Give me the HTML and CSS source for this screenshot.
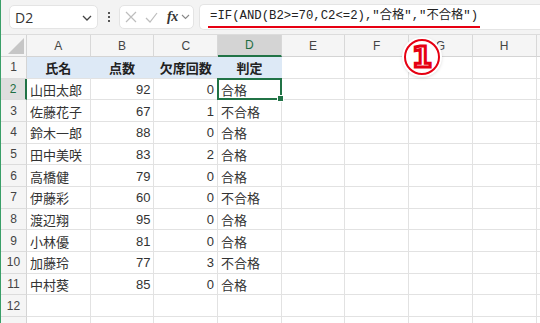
FILE: index.html
```html
<!DOCTYPE html>
<html lang="ja">
<head>
<meta charset="utf-8">
<link rel="stylesheet" href="styles.css">
</head>
<body>
<div class="app">
  <div class="toolbar">
    <div class="namebox"><span class="ref">D2</span>
      <svg class="chev" width="10" height="6" viewBox="0 0 10 6"><path d="M1 1l4 4 4-4" fill="none" stroke="#444" stroke-width="1.3"/></svg>
    </div>
    <div class="dots"><i></i><i></i><i></i></div>
    <div class="fnbox">
      <svg class="ic" width="12" height="12" viewBox="0 0 12 12"><path d="M1 1l10 10M11 1L1 11" stroke="#bdbdbd" stroke-width="1.2" fill="none"/></svg>
      <svg class="ic" width="13" height="11" viewBox="0 0 13 11"><path d="M1 6l4 4 7-9" stroke="#bdbdbd" stroke-width="1.2" fill="none"/></svg>
      <span class="fx">fx</span>
      <svg class="chev2" width="9" height="6" viewBox="0 0 9 6"><path d="M1 1l3.5 3.5L8 1" fill="none" stroke="#888" stroke-width="1.1"/></svg>
    </div>
    <div class="formula"><span class="ftext">=IF(AND(B2&gt;=70,C2&lt;=2),"合格","不合格")</span></div>
  </div>
  <div class="sheet">
    <div class="corner"><span class="tri"></span></div>
    <div class="ch">A</div><div class="ch">B</div><div class="ch">C</div><div class="ch sel">D</div><div class="ch">E</div><div class="ch">F</div><div class="ch">G</div><div class="ch">H</div><div class="ch"></div>

    <div class="rh">1</div><div class="c hd">氏名</div><div class="c hd">点数</div><div class="c hd">欠席回数</div><div class="c hd">判定</div><div class="c"></div><div class="c"></div><div class="c"></div><div class="c"></div><div class="c"></div>

    <div class="rh sel">2</div><div class="c">山田太郎</div><div class="c n">92</div><div class="c n">0</div><div class="c active">合格</div><div class="c"></div><div class="c"></div><div class="c"></div><div class="c"></div><div class="c"></div>

    <div class="rh">3</div><div class="c">佐藤花子</div><div class="c n">67</div><div class="c n">1</div><div class="c">不合格</div><div class="c"></div><div class="c"></div><div class="c"></div><div class="c"></div><div class="c"></div>

    <div class="rh">4</div><div class="c">鈴木一郎</div><div class="c n">88</div><div class="c n">0</div><div class="c">合格</div><div class="c"></div><div class="c"></div><div class="c"></div><div class="c"></div><div class="c"></div>

    <div class="rh">5</div><div class="c">田中美咲</div><div class="c n">83</div><div class="c n">2</div><div class="c">合格</div><div class="c"></div><div class="c"></div><div class="c"></div><div class="c"></div><div class="c"></div>

    <div class="rh">6</div><div class="c">高橋健</div><div class="c n">79</div><div class="c n">0</div><div class="c">合格</div><div class="c"></div><div class="c"></div><div class="c"></div><div class="c"></div><div class="c"></div>

    <div class="rh">7</div><div class="c">伊藤彩</div><div class="c n">60</div><div class="c n">0</div><div class="c">不合格</div><div class="c"></div><div class="c"></div><div class="c"></div><div class="c"></div><div class="c"></div>

    <div class="rh">8</div><div class="c">渡辺翔</div><div class="c n">95</div><div class="c n">0</div><div class="c">合格</div><div class="c"></div><div class="c"></div><div class="c"></div><div class="c"></div><div class="c"></div>

    <div class="rh">9</div><div class="c">小林優</div><div class="c n">81</div><div class="c n">0</div><div class="c">合格</div><div class="c"></div><div class="c"></div><div class="c"></div><div class="c"></div><div class="c"></div>

    <div class="rh">10</div><div class="c">加藤玲</div><div class="c n">77</div><div class="c n">3</div><div class="c">不合格</div><div class="c"></div><div class="c"></div><div class="c"></div><div class="c"></div><div class="c"></div>

    <div class="rh">11</div><div class="c">中村葵</div><div class="c n">85</div><div class="c n">0</div><div class="c">合格</div><div class="c"></div><div class="c"></div><div class="c"></div><div class="c"></div><div class="c"></div>

    <div class="rh">12</div><div class="c"></div><div class="c"></div><div class="c"></div><div class="c"></div><div class="c"></div><div class="c"></div><div class="c"></div><div class="c"></div><div class="c"></div>

    <div class="rh"></div><div class="c"></div><div class="c"></div><div class="c"></div><div class="c"></div><div class="c"></div><div class="c"></div><div class="c"></div><div class="c"></div><div class="c"></div>
  </div>
  <div class="badge"><span>1</span></div>
</div>
</body>
</html>
```
FILE: styles.css
```css
html, body {
  margin: 0;
  padding: 0;
}
body {
  width: 540px;
  height: 323px;
  overflow: hidden;
  background: #fff;
  font-family: "Liberation Sans", "Noto Sans CJK JP", sans-serif;
}
.app {
  position: relative;
  width: 539px;
  height: 323px;
  border-left: 1px solid #3a9f68;
  overflow: hidden;
}
.toolbar {
  display: flex;
  align-items: center;
  height: 34px;
  background: #f3f3f3;
  border-bottom: 1px solid #dcdcdc;
  padding-left: 8px;
}
.namebox {
  box-sizing: border-box;
  width: 89px;
  height: 24px;
  background: #fff;
  border: 1px solid #e4e4e4;
  border-radius: 5px;
  display: flex;
  align-items: center;
  justify-content: space-between;
  padding: 0 5px 0 5px;
}
.ref {
  font-family: "Open Sans", "Liberation Sans", sans-serif;
  font-size: 14px;
  color: #333;
}
.chev { margin-top: 1px; }
.dots {
  width: 21px;
  display: flex;
  flex-direction: column;
  align-items: center;
  gap: 2px;
}
.dots i {
  display: block;
  width: 2px;
  height: 2px;
  background: #555;
}
.fnbox {
  box-sizing: border-box;
  width: 75px;
  height: 24px;
  background: #fff;
  border: 1px solid #e4e4e4;
  border-radius: 5px;
  display: flex;
  align-items: center;
  padding-left: 5px;
}
.fnbox .ic { margin-right: 8px; }
.fx {
  font-family: "Liberation Serif", serif;
  font-style: italic;
  font-weight: bold;
  font-size: 14px;
  color: #333;
  margin-left: 1px;
  margin-right: 3px;
  letter-spacing: -0.5px;
}
.formula {
  flex: 1;
  height: 24px;
  margin-left: 5px;
  background: #fff;
  border: 1px solid #e4e4e4;
  border-right: none;
  border-radius: 5px 0 0 5px;
  display: flex;
  align-items: flex-start;
  padding-left: 8px;
}
.ftext {
  font-family: "Liberation Mono", "Noto Sans CJK JP", monospace;
  font-size: 12.3px;
  line-height: 16px;
  margin-top: 3px;
  padding: 0 2px 2px 2px;
  color: #222;
  border-bottom: 2px solid #e60012;
}
.sheet {
  display: grid;
  grid-template-columns: 26px repeat(8, 63.7px) 1fr;
  grid-template-rows: 22px;
  grid-auto-rows: 21.67px;
}
.corner {
  position: relative;
  background: #f5f5f5;
  border-right: 1px solid #d4d4d4;
  border-bottom: 1px solid #d4d4d4;
}
.tri {
  position: absolute;
  right: 2px;
  bottom: 2px;
  width: 0;
  height: 0;
  border-left: 16px solid transparent;
  border-bottom: 16px solid #c6c6c6;
}
.ch {
  box-sizing: border-box;
  background: #f5f5f5;
  border-right: 1px solid #d8d8d8;
  border-bottom: 1px solid #d4d4d4;
  display: flex;
  align-items: center;
  justify-content: center;
  font-size: 12px;
  color: #444;
}
.ch.sel {
  background: #d4d4d4;
  color: #1e6e42;
  border-bottom: 2px solid #217346;
}
.rh {
  box-sizing: border-box;
  background: #f5f5f5;
  border-right: 1px solid #d4d4d4;
  border-bottom: 1px solid #dcdcdc;
  display: flex;
  align-items: center;
  justify-content: center;
  font-size: 12px;
  color: #444;
}
.rh.sel {
  background: #dedede;
  color: #1e6e42;
  border-right: 2px solid #217346;
}
.c {
  box-sizing: border-box;
  border-right: 1px solid #e2e2e2;
  border-bottom: 1px solid #e2e2e2;
  font-size: 13px;
  color: #333;
  display: flex;
  align-items: center;
  padding: 1px 3px 0 3px;
  white-space: nowrap;
  overflow: hidden;
}
.c.n {
  justify-content: flex-end;
}
.c.hd {
  background: #dde9f6;
  border-right-color: #dde9f6;
  border-bottom-color: #e2e2e2;
  justify-content: center;
  font-weight: bold;
  color: #222;
}
.c.active {
  position: relative;
  overflow: visible;
}
.c.active::after {
  content: "";
  position: absolute;
  left: -1px;
  top: -1px;
  right: -1px;
  bottom: -1px;
  border: 2px solid #217346;
}
.c.active::before {
  content: "";
  position: absolute;
  right: -3px;
  bottom: -3px;
  width: 5px;
  height: 5px;
  background: #217346;
  border: 1px solid #fff;
  z-index: 2;
}
.badge {
  position: absolute;
  left: 403px;
  top: 39px;
  box-sizing: border-box;
  width: 36px;
  height: 36px;
  border-radius: 50%;
  border: 2.5px solid #e60012;
  background: #fff;
  box-shadow: 0 0 0 2px #fff, 0 1px 4px rgba(0,0,0,0.35);
  display: flex;
  align-items: center;
  justify-content: center;
}
.badge span {
  font-family: "DejaVu Sans", sans-serif;
  font-size: 29px;
  font-weight: bold;
  color: #fff;
  -webkit-text-stroke: 3px #e60012;
  line-height: 1;
  margin-top: 1px;
}
```
